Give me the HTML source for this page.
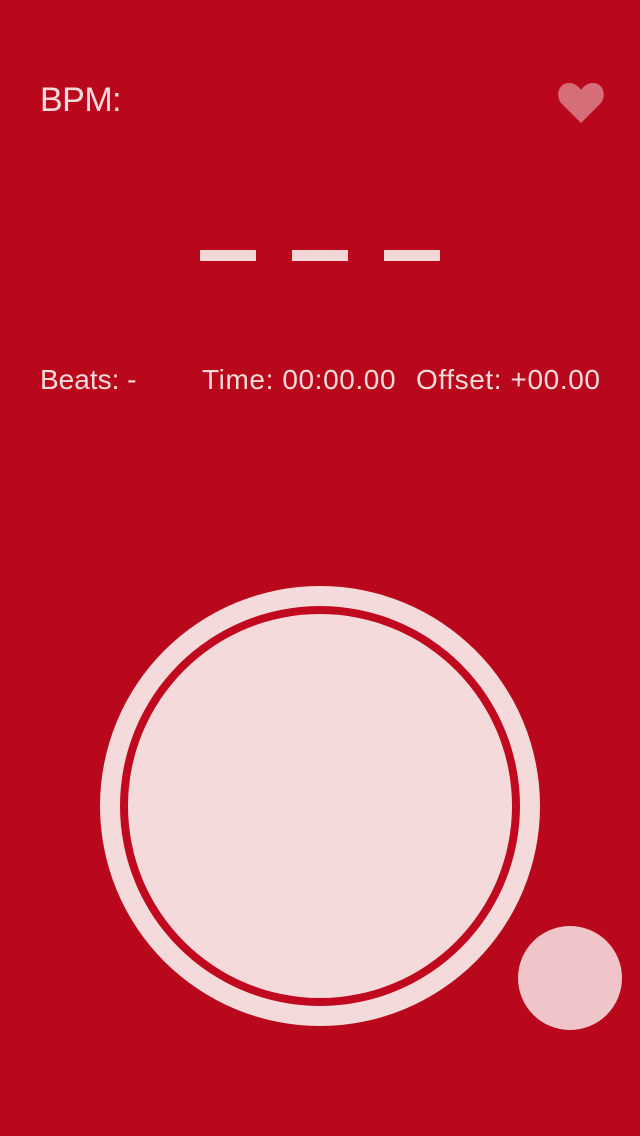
<!DOCTYPE html>
<html><head><style>
html,body{margin:0;padding:0}
body{width:640px;height:1136px;background:#b9081b;position:relative;overflow:hidden;font-family:"Liberation Sans",sans-serif;color:#f5dadc;font-weight:300}
.t{position:absolute;white-space:nowrap;line-height:1}
.d{position:absolute;top:250px;width:56px;height:11px;background:#f2d6d8}
.c{position:absolute;border-radius:50%}
</style></head><body>
<div class="t" style="left:40px;top:83px;font-size:34px;letter-spacing:-0.5px">BPM:</div>
<svg style="position:absolute;left:556px;top:80px" width="50" height="46" viewBox="0 0 50 46"><path d="M25 43 L6 24 C-1 17 2 3 13 3 C19 3 23 7 25 10 C27 7 31 3 37 3 C48 3 51 17 44 24 Z" fill="#d66e7a"/></svg>
<div class="d" style="left:200px"></div>
<div class="d" style="left:292px"></div>
<div class="d" style="left:384px"></div>
<div class="t" style="left:40px;top:366px;font-size:28px">Beats: -</div>
<div class="t" style="left:202px;top:366px;font-size:28px;letter-spacing:0.6px">Time: 00:00.00</div>
<div class="t" style="left:416px;top:366px;font-size:28px;letter-spacing:0.6px">Offset: +00.00</div>
<div class="c" style="left:100px;top:586px;width:440px;height:440px;background:#f5dadb"></div>
<div class="c" style="left:120px;top:606px;width:400px;height:400px;background:#c0091f"></div>
<div class="c" style="left:128px;top:614px;width:384px;height:384px;background:#f5dadb"></div>
<div class="c" style="left:518px;top:926px;width:104px;height:104px;background:#efc5c9"></div>
</body></html>
